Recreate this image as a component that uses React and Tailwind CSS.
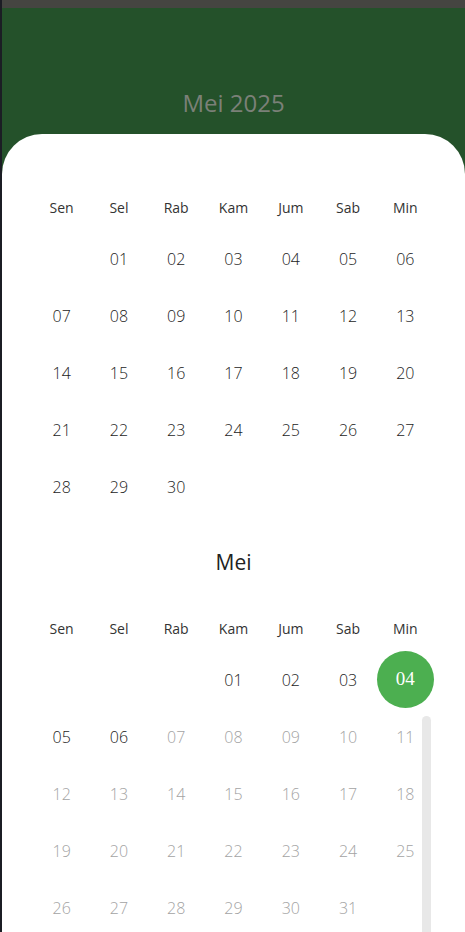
import React from "react";

const weekdays = ["Sen", "Sel", "Rab", "Kam", "Jum", "Sab", "Min"];

// april: starts on Selasa, 30 days
const april = [
  [null, "01", "02", "03", "04", "05", "06"],
  ["07", "08", "09", "10", "11", "12", "13"],
  ["14", "15", "16", "17", "18", "19", "20"],
  ["21", "22", "23", "24", "25", "26", "27"],
  ["28", "29", "30", null, null, null, null],
];

// may: starts on Kamis, today = 04
const may = [
  [null, null, null, "01", "02", "03", "04"],
  ["05", "06", "07", "08", "09", "10", "11"],
  ["12", "13", "14", "15", "16", "17", "18"],
  ["19", "20", "21", "22", "23", "24", "25"],
  ["26", "27", "28", "29", "30", "31", null],
];

function WeekHeader() {
  return (
    <div className="grid grid-cols-7 w-[401px] h-[46px] items-center">
      {weekdays.map((d) => (
        <div key={d} className="text-center text-[14px] text-[#333333]">
          {d}
        </div>
      ))}
    </div>
  );
}

function MonthGrid({ rows, selected, lastEnabled }) {
  return (
    <div className="grid grid-cols-7 w-[401px]">
      {rows.flat().map((day, i) => {
        if (!day) return <div key={i} className="h-[57px]" />;
        if (day === selected) {
          return (
            <div key={i} className="h-[57px] flex items-center justify-center">
              <div className="w-[57px] h-[57px] rounded-full bg-[#4caf50] flex items-center justify-center text-white text-[19px] font-['Liberation_Serif',serif]">
                {day}
              </div>
            </div>
          );
        }
        const off = lastEnabled && Number(day) > lastEnabled;
        return (
          <div
            key={i}
            className={
              off
                ? "h-[57px] flex items-center justify-center text-[16px] font-light text-[#a3a3a3]"
                : "h-[57px] flex items-center justify-center text-[16px] font-light text-[#1c1c1c]"
            }
          >
            {day}
          </div>
        );
      })}
    </div>
  );
}

export default function App() {
  return (
    <div className="h-[932px] w-[465px] overflow-hidden flex bg-[#24512a] font-['Open_Sans','Noto_Sans',sans-serif]">
      <div className="w-[2px] shrink-0 bg-[#1b1d24]" />
      <div className="flex-1 flex flex-col">
        <div className="h-[8px] shrink-0 bg-[#454541]" />
        <div className="h-[126px] shrink-0 flex items-end justify-center pb-[15px]">
          <h1 className="text-[24px] text-[#7b8078] leading-[32px]">Mei 2025</h1>
        </div>
        <div className="relative shrink-0 flex-1 bg-white rounded-t-[40px] pt-[50px] pl-[31px]">
          <WeekHeader />
          <MonthGrid rows={april} />

          <div className="w-[401px] mt-[28px] h-[40px] flex items-center justify-center text-[21px] text-[#222222]">
            Mei
          </div>
          <div className="mt-[22px]">
            <WeekHeader />
          </div>
          <MonthGrid rows={may} selected="04" lastEnabled={6} />

          {/* scrollbar */}
          <div className="absolute left-[420px] top-[582px] w-[9px] h-[260px] rounded-t-full bg-[#e8e8e8]" />
        </div>
      </div>
    </div>
  );
}
